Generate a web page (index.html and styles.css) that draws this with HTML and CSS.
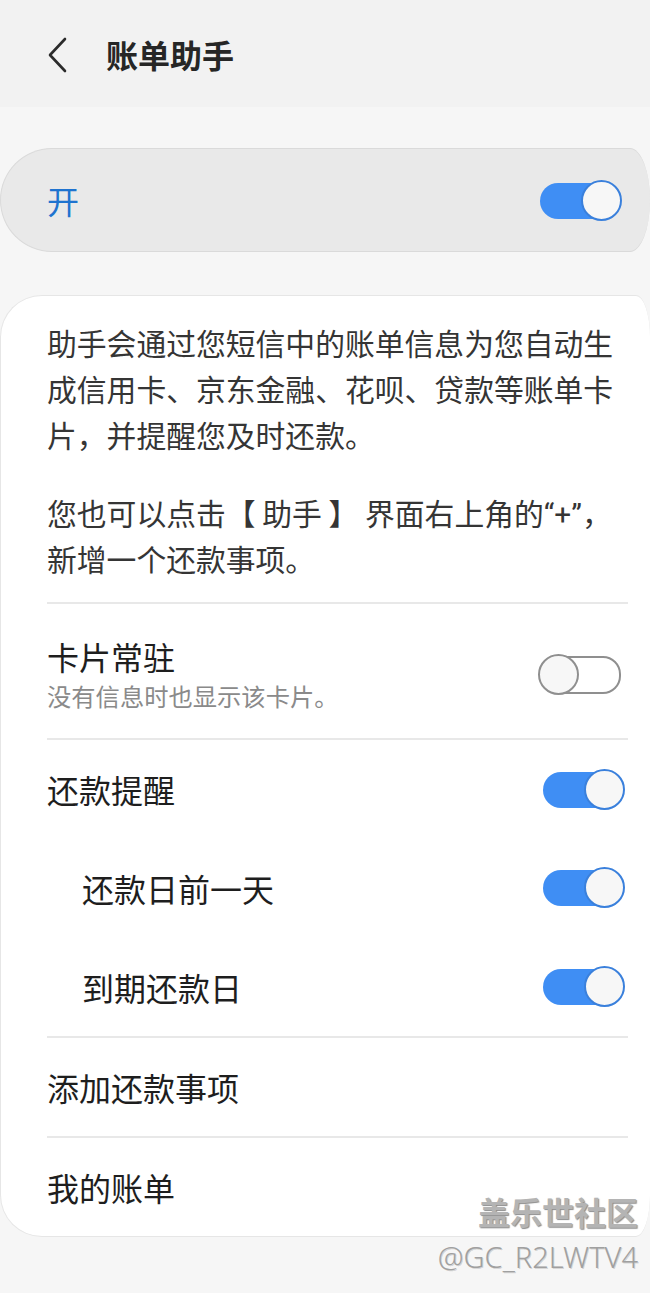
FILE: index.html
```html
<!DOCTYPE html>
<html lang="zh-CN">
<head>
    <meta charset="UTF-8">
    <meta name="viewport" content="width=device-width, initial-scale=1.0">
    <title>账单助手</title>
    <link rel="stylesheet" href="styles.css">
</head>
<body>

    <header class="topbar">
        <svg class="back" width="22" height="36" viewBox="0 0 22 36">
            <path d="M18 2 L3 18 L18 34" fill="none" stroke="#2b2b2b" stroke-width="2.6" stroke-linecap="round" stroke-linejoin="round"/>
        </svg>
        <h1>账单助手</h1>
    </header>

    <main class="page">
        <div class="master">
            <span class="master-label">开</span>
            <span class="toggle"></span>
        </div>

        <section class="card">
            <div class="intro">
                <p>助手会通过您短信中的账单信息为您自动生成信用卡、京东金融、花呗、贷款等账单卡片，并提醒您及时还款。</p>
                <p>您也可以点击【 助手 】 界面右上角的<span class="latin">“+”</span>，新增一个还款事项。</p>
            </div>

            <div class="row row-tall">
                <div>
                    <div class="row-title">卡片常驻</div>
                    <div class="row-sub">没有信息时也显示该卡片。</div>
                </div>
                <span class="toggle off"></span>
            </div>

            <div class="row">
                <div class="row-title">还款提醒</div>
                <span class="toggle"></span>
            </div>
            <div class="row sub">
                <div class="row-title">还款日前一天</div>
                <span class="toggle"></span>
            </div>
            <div class="row sub">
                <div class="row-title">到期还款日</div>
                <span class="toggle"></span>
            </div>

            <div class="row">
                <div class="row-title">添加还款事项</div>
            </div>
            <div class="row">
                <div class="row-title">我的账单</div>
            </div>
        </section>

        <div class="watermark">
            <div class="wm-brand">盖乐世社区</div>
            <div class="wm-user">@GC_R2LWTV4</div>
        </div>
    </main>

</body>
</html>
```

FILE: styles.css
```css
body {
    margin: 0;
    font-family: "Noto Sans CJK SC", "Noto Sans", sans-serif;
    color: #222222;
    background-color: #f6f6f6;
}
.topbar {
    height: 107px;
    background-color: #f2f2f2;
    display: flex;
    align-items: center;
    padding-left: 47px;
    box-sizing: border-box;
}
.topbar .back {
    margin-top: 2px;
}
.topbar h1 {
    margin: 0 0 0 37px;
    font-size: 32px;
    font-weight: 700;
    color: #262626;
    line-height: 44px;
}
.page {
    position: relative;
    padding: 41px 0 55px;
}
/* right ends run off the screen, so the curve there is only partly seen */
.master {
    height: 104px;
    box-sizing: border-box;
    padding: 0 25px 0 46px;
    background-color: #e9e9e9;
    border: 1px solid #dadada;
    border-right: none;
    border-radius: 52px 20px 20px 52px / 52px 52px 52px 52px;
    display: flex;
    align-items: center;
    justify-content: space-between;
}
.master-label {
    font-size: 32px;
    color: #1f73cf;
    line-height: 44px;
}
.card {
    margin-top: 43px;
    padding: 0 22px 0 46px;
    background-color: #ffffff;
    border: 1px solid #e6e6e6;
    border-right: none;
    border-radius: 42px 14px 14px 42px / 42px 42px 42px 42px;
}
.intro {
    padding: 23px 0 21px;
}
.intro p {
    margin: 0;
    font-size: 29.8px;
    line-height: 46px;
    color: #353535;
}
.intro p + p {
    margin-top: 32px;
}
.latin {
    font-family: "Roboto", sans-serif;
    line-height: 1;
}
.row {
    min-height: 98px;
    border-top: 2px solid #e8e8e8;
    display: flex;
    align-items: center;
    justify-content: space-between;
}
.row.sub {
    min-height: 99px;
    border-top: none;
    padding-left: 35px;
}
.row-tall {
    min-height: 0;
    padding: 32px 0 25px;
}
.row-title {
    font-size: 32px;
    line-height: 40px;
    color: #1e1e1e;
}
.row-sub {
    margin-top: 3px;
    font-size: 24.3px;
    line-height: 34px;
    color: #8a8a8a;
}
.toggle {
    position: relative;
    flex: none;
    width: 83px;
    height: 41px;
    margin-right: 3px;
}
.toggle::before {
    content: "";
    position: absolute;
    left: 1px;
    top: 3px;
    width: 78px;
    height: 36px;
    border-radius: 18px;
    background-color: #3f8ef4;
}
.toggle::after {
    content: "";
    position: absolute;
    right: 0;
    top: 0;
    width: 37px;
    height: 37px;
    border-radius: 50%;
    background-color: #f7f7f7;
    border: 2px solid #3a80dc;
}
.toggle.off {
    margin-right: 7px;
}
.toggle.off::before {
    box-sizing: border-box;
    left: 2px;
    top: 2px;
    width: 81px;
    height: 38px;
    background-color: transparent;
    border: 2px solid #8f8f8f;
}
.toggle.off::after {
    left: 0;
    right: auto;
    border-color: #8f8f8f;
}
.watermark {
    position: absolute;
    right: 12px;
    bottom: 17px;
    text-align: right;
}
.wm-brand {
    font-size: 32px;
    line-height: 44px;
    font-weight: 700;
    color: #b4b4b4;
    text-shadow: 1px 1px 1px rgba(0, 0, 0, 0.45), -1px -1px 0 rgba(255, 255, 255, 0.7);
}
.wm-user {
    margin-top: 6px;
    font-family: "Noto Sans", sans-serif;
    font-size: 29px;
    font-weight: 300;
    line-height: 36px;
    color: #a0a0a0;
    text-shadow: 1px 1px 0 rgba(0, 0, 0, 0.15);
}
```
